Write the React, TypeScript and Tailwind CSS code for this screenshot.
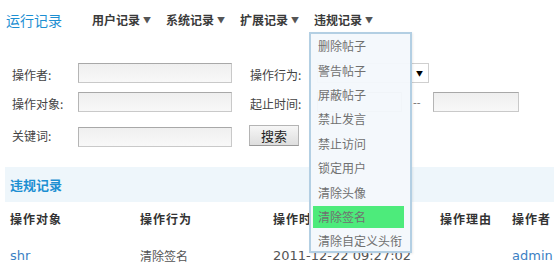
const cjk = { fontFamily: '"Noto Sans CJK SC", "DejaVu Sans", sans-serif' };
const latin = { fontFamily: '"DejaVu Sans", "Noto Sans CJK SC", sans-serif' };

const navItems = ["用户记录", "系统记录", "扩展记录", "违规记录"];

const menuItems = [
  "删除帖子",
  "警告帖子",
  "屏蔽帖子",
  "禁止发言",
  "禁止访问",
  "锁定用户",
  "清除头像",
  "清除签名",
  "清除自定义头衔",
];

const inputCls =
  "h-[20px] border border-[#c9c9c9] border-t-[#a8a8a8] border-l-[#b5b5b5] bg-gradient-to-b from-[#efefef] to-[#f8f8f8]";

function Label({ children }: { children: string }) {
  return <span className="text-[12px] text-[#444] leading-none">{children}</span>;
}

export default function App() {
  return (
    <div className="relative w-[554px] h-[272px] overflow-hidden bg-white" style={cjk}>
      {/* top nav */}
      <div className="flex items-center h-10">
        <span className="pl-[6px] w-[92px] text-[14px] text-[#1d8fd2]">运行记录</span>
        <div className="flex gap-[13px]">
          {navItems.map((n) => (
            <span key={n} className="flex items-center text-[12px] font-bold text-[#3a3a3a] w-[61px]">
              {n}
              <span className="ml-[3px] text-[8px] text-[#555]">▼</span>
            </span>
          ))}
        </div>
      </div>

      {/* search form */}
      <div className="mt-[23px] pl-[12px]">
        <div className="flex items-center h-[20px]">
          <div className="w-[66px]">
            <Label>操作者:</Label>
          </div>
          <div className={`${inputCls} w-[154px]`} />
          <div className="w-[18px]" />
          <div className="w-[67px]">
            <Label>操作行为:</Label>
          </div>
          <div className="relative w-[112px] h-[20px] border border-[#cfcfcf] bg-white">
            <span className="absolute right-[5px] top-[6px] text-[7px] text-black leading-none">▼</span>
          </div>
        </div>
        <div className="flex items-center h-[20px] mt-[9px]">
          <div className="w-[66px]">
            <Label>操作对象:</Label>
          </div>
          <div className={`${inputCls} w-[154px]`} />
          <div className="w-[18px]" />
          <div className="w-[67px]">
            <Label>起止时间:</Label>
          </div>
          <div className={`${inputCls} w-[85px]`} />
          <span className="w-[31px] pl-[11px] text-[11px] text-[#666] leading-none">--</span>
          <div className={`${inputCls} w-[86px]`} />
        </div>
        <div className="flex h-[22px] mt-[13px]">
          <div className="w-[66px] flex items-end pb-[5px]">
            <Label>关键词:</Label>
          </div>
          <div className={`${inputCls} w-[154px] self-end h-[19px]`} />
          <div className="w-[17px]" />
          <button
            type="button"
            className="h-[21px] w-[50px] border border-[#b4b4b4] border-b-[#999] bg-gradient-to-b from-[#f6f6f6] to-[#dedede] text-[13px] text-[#222] leading-none"
          >
            搜索
          </button>
        </div>
      </div>

      {/* section bar */}
      <div className="mt-[20px] ml-[5px] h-[35px] flex items-center pl-[5px] bg-[#eef6fb]">
        <span className="text-[13px] font-bold text-[#1d8fd2]">违规记录</span>
      </div>

      {/* table */}
      <div className="grid grid-cols-[130px_133px_167px_72px_1fr] pl-[10px] items-center h-[34px] text-[12px] font-bold text-[#333] tracking-[1px]">
        <span>操作对象</span>
        <span>操作行为</span>
        <span>操作时间</span>
        <span>操作理由</span>
        <span>操作者</span>
      </div>
      <div className="grid grid-cols-[130px_133px_167px_72px_1fr] pl-[10px] items-center h-[40px] text-[13px]">
        <span className="text-[#3b7fc4]" style={latin}>shr</span>
        <span className="text-[12px] text-[#555]">清除签名</span>
        <span className="text-[#555]" style={latin}>2011-12-22 09:27:02</span>
        <span />
        <span className="text-[#3b7fc4]" style={latin}>admin</span>
      </div>

      {/* dropdown menu */}
      <div className="absolute left-[309px] top-[32px] w-[103px] h-[221px] border-2 border-[#b3cfe3] bg-[#f3f8fc]/95 shadow-[1px_1px_2px_rgba(0,0,0,0.08)]">
        {menuItems.map((m) => (
          <div key={m} className="h-[24.4px] flex items-center">
            <div
              className={`ml-[2px] w-[91px] h-[22px] flex items-center pl-[5px] text-[12px] text-[#707070] ${
                m === "清除签名" ? "bg-[#4deb7b]" : ""
              }`}
            >
              {m}
            </div>
          </div>
        ))}
      </div>
    </div>
  );
}
